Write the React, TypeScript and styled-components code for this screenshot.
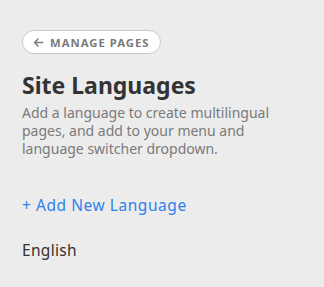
import React from 'react';
import styled, { createGlobalStyle } from 'styled-components';

const GlobalStyle = createGlobalStyle`
  html, body {
    margin: 0;
    padding: 0;
    background: #ececec;
  }
  body {
    font-family: "Noto Sans", "Open Sans", sans-serif;
  }
`;

const Panel = styled.div`
  width: 324px;
  height: 287px;
  box-sizing: border-box;
  padding: 30px 22px 0 22px;
  background: #ececec;
  display: flex;
  flex-direction: column;
  align-items: flex-start;
`;

const BackButton = styled.button`
  display: inline-flex;
  align-items: center;
  gap: 6px;
  height: 24px;
  padding: 0 11px 0 10px;
  border: 1px solid #c9c9c9;
  border-radius: 12px;
  background: #fff;
  color: #7a7a7a;
  font-family: "Noto Sans", "Open Sans", sans-serif;
  font-size: 11.3px;
  font-weight: 700;
  letter-spacing: 1px;
  text-transform: uppercase;
  cursor: pointer;
`;

const Title = styled.h1`
  margin: 16px 0 0 0;
  font-size: 23px;
  font-weight: 700;
  color: #333;
  line-height: 30px;
`;

const Description = styled.p`
  margin: 4px 0 0 0;
  font-size: 14px;
  line-height: 18px;
  color: #7a7a7a;
  max-width: 274px;
`;

const AddLink = styled.a`
  margin-top: 36px;
  font-size: 15.5px;
  letter-spacing: 0.55px;
  color: #2f80ed;
  text-decoration: none;
  cursor: pointer;
`;

const LanguageItem = styled.div`
  margin-top: 23px;
  font-size: 15.5px;
  letter-spacing: 0.3px;
  color: #333;
`;

const ArrowIcon = () => (
  <svg width="11" height="11" viewBox="0 0 12 12" fill="none" stroke="#7a7a7a" strokeWidth="1.6" strokeLinecap="round" strokeLinejoin="round">
    <path d="M10.5 6H1.8M5.5 2.2L1.7 6l3.8 3.8" />
  </svg>
);

export default function App() {
  return (
    <>
      <GlobalStyle />
      <Panel>
        <BackButton>
          <ArrowIcon />
          Manage Pages
        </BackButton>
        <Title>Site Languages</Title>
        <Description>
          Add a language to create multilingual pages, and add to your menu and language switcher dropdown.
        </Description>
        <AddLink>+ Add New Language</AddLink>
        <LanguageItem>English</LanguageItem>
      </Panel>
    </>
  );
}
